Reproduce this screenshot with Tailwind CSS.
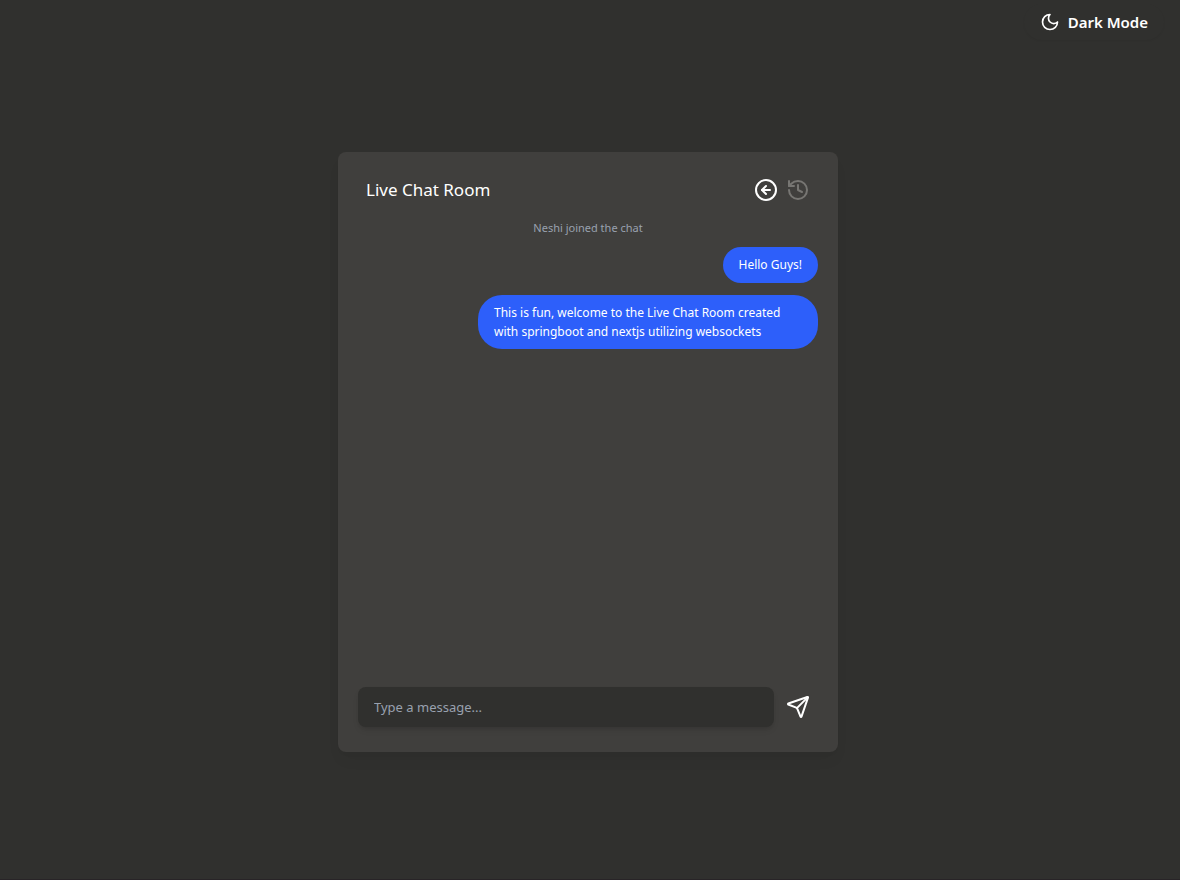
<!DOCTYPE html>
<html lang="en">
<head>
  <meta charset="UTF-8">
  <meta name="viewport" content="width=device-width, initial-scale=1.0">
  <title>Live Chat Room</title>
  <script src="https://cdn.jsdelivr.net/npm/@tailwindcss/browser@4"></script>
</head>
<body class="min-h-screen flex flex-col border-b border-[#282427] bg-[#30302e] text-white font-['Segoe_UI','Noto_Sans',sans-serif]">
  <header class="flex justify-end pt-1 pr-4">
    <button type="button" class="flex items-center gap-2 rounded-full px-4 py-2 text-[15px] leading-5 font-semibold shadow-xs">
      <svg class="size-5" viewBox="0 0 24 24" fill="none" stroke="currentColor" stroke-width="2" stroke-linecap="round" stroke-linejoin="round"><path d="M12 3a6 6 0 0 0 9 9 9 9 0 1 1-9-9Z"/></svg>
      Dark Mode
    </button>
  </header>
  <main class="flex-1 flex items-center justify-center pr-1 pb-[15px]">
    <section class="flex flex-col w-full max-w-[500px] h-[600px] rounded-lg bg-[#403f3d] p-5 pb-[25px] shadow-lg shadow-black/5">
      <div class="flex items-center justify-between px-2 h-9">
        <h1 class="text-[17px] leading-7">Live Chat Room</h1>
        <div class="flex gap-2">
          <button type="button" aria-label="Leave chat">
            <svg class="size-6" viewBox="0 0 24 24" fill="none" stroke="currentColor" stroke-width="2" stroke-linecap="round" stroke-linejoin="round"><circle cx="12" cy="12" r="10"/><path d="M16 12H8"/><path d="m12 8-4 4 4 4"/></svg>
          </button>
          <button type="button" aria-label="Chat history" class="text-[#777673]">
            <svg class="size-6" viewBox="0 0 24 24" fill="none" stroke="currentColor" stroke-width="2" stroke-linecap="round" stroke-linejoin="round"><path d="M3 12a9 9 0 1 0 9-9 9.75 9.75 0 0 0-6.74 2.74L3 8"/><path d="M3 3v5h5"/><path d="M12 7v5l4 2"/></svg>
          </button>
        </div>
      </div>
      <!-- messages -->
      <div class="flex-1 flex flex-col gap-3 pt-3 overflow-y-auto">
        <p class="text-center text-[11px] leading-[15px] text-gray-400">Neshi joined the chat</p>
        <p class="self-end rounded-3xl bg-[#2d5ffa] px-4 py-2 text-xs leading-5">Hello Guys!</p>
        <p class="self-end w-[340px] rounded-3xl bg-[#2d5ffa] px-4 py-2 text-xs leading-[19px]">This is fun, welcome to the Live Chat Room created with springboot and nextjs utilizing websockets</p>
      </div>
      <form class="flex items-center gap-3">
        <input type="text" aria-label="Message" placeholder="Type a message..." class="flex-1 h-10 rounded-lg bg-[#30302e] px-4 text-[13px] placeholder:text-gray-400 shadow-md outline-none">
        <button type="button" aria-label="Send" class="mr-2">
          <svg class="size-6" viewBox="0 0 24 24" fill="none" stroke="currentColor" stroke-width="2" stroke-linecap="round" stroke-linejoin="round"><path d="M14.536 21.686a.5.5 0 0 0 .937-.024l6.5-19a.496.496 0 0 0-.635-.635l-19 6.5a.5.5 0 0 0-.024.937l7.93 3.18a2 2 0 0 1 1.112 1.11z"/><path d="m21.854 2.147-10.94 10.939"/></svg>
        </button>
      </form>
    </section>
  </main>
</body>
</html>
